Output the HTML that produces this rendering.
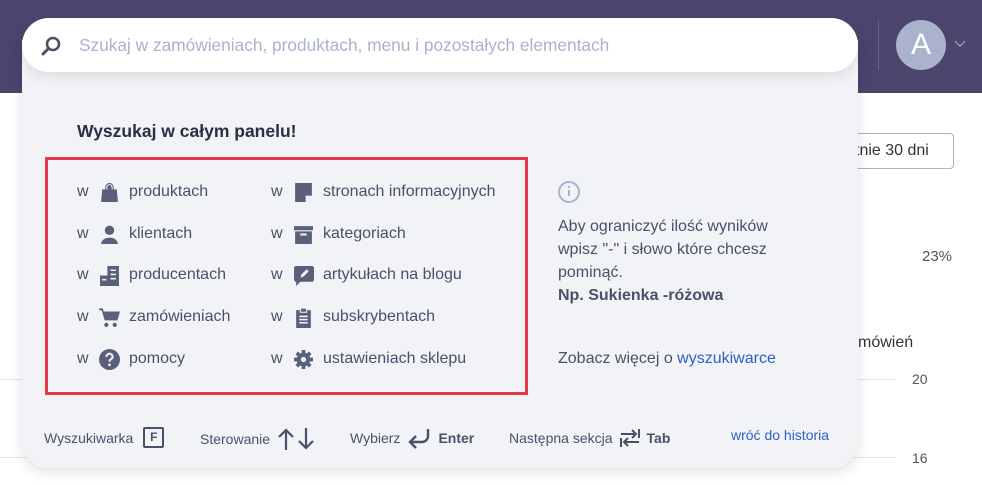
<!DOCTYPE html>
<html><head><meta charset="utf-8"><style>
*{margin:0;padding:0;box-sizing:border-box}
body{width:982px;height:485px;overflow:hidden;background:#fff;font-family:"Liberation Sans",sans-serif;color:#4a5068;position:relative}
.hdr{position:absolute;left:0;top:0;width:982px;height:93px;background:#4b456d}
.abs{position:absolute;white-space:nowrap}
.panel{position:absolute;left:22px;top:40px;width:836px;height:428px;background:#f2f3f7;border-radius:0 0 26px 26px;box-shadow:0 4px 14px rgba(0,0,0,.12)}
.search{position:absolute;left:22px;top:18px;width:836px;height:54px;background:#fff;border-radius:27px;box-shadow:0 6px 12px rgba(0,0,0,.08)}
.red{position:absolute;left:45px;top:157px;width:483px;height:238px;border:3px solid #e23b45}
.row{position:absolute;font-size:16px;color:#4a5068;display:flex;align-items:center;height:24px}
.row .w{width:22px}
.row svg{width:21px;height:21px;margin-right:9px}
.ft{position:absolute;top:427px;font-size:14px;color:#4a5068;display:flex;align-items:center;gap:6px;white-space:nowrap}
</style></head><body>
<div class="hdr"></div>
<div class="abs" style="left:878px;top:20px;width:1px;height:50px;background:#6a6590"></div>
<div class="abs" style="left:896px;top:20px;width:50px;height:50px;border-radius:50%;background:#aab2cd;color:#fff;font-size:30px;text-align:center;line-height:50px">A</div>
<svg class="abs" style="left:954px;top:40px" width="12" height="8" viewBox="0 0 12 8"><path d="M1 1l5 5 5-5" fill="none" stroke="#a9a6c4" stroke-width="1.2"/></svg>
<div class="abs" style="left:840px;top:133px;width:114px;height:36px;border:1px solid #aab2cd;border-radius:4px;font-size:16px;line-height:34px;padding-left:14px;color:#333">tnie 30 dni</div>
<div class="abs" style="left:922px;top:248px;font-size:15px;color:#555">23%</div>
<div class="abs" style="left:858px;top:334px;font-size:16px;color:#333">mówień</div>
<div class="abs" style="left:0;top:379px;width:895px;height:1px;background:#e4e4e4"></div>
<div class="abs" style="left:912px;top:371px;font-size:14px;color:#555">20</div>
<div class="abs" style="left:0;top:457px;width:895px;height:1px;background:#e4e4e4"></div>
<div class="abs" style="left:912px;top:450px;font-size:14px;color:#555">16</div>

<div class="panel"></div>
<div class="search"></div>
<svg class="abs" style="left:40px;top:35px" width="22" height="22" viewBox="0 0 22 22"><circle cx="13" cy="9" r="6" fill="none" stroke="#4a5068" stroke-width="2.6"/><path d="M8.5 13.5L3 19" stroke="#4a5068" stroke-width="3" stroke-linecap="round"/></svg>
<div class="abs" style="left:79px;top:35px;font-size:17.3px;color:#aab2cd">Szukaj w zamówieniach, produktach, menu i pozostałych elementach</div>
<div class="abs" style="left:77px;top:121px;font-size:17.5px;font-weight:bold;color:#2b2f3f">Wyszukaj w całym panelu!</div>
<div class="red"></div>

<div class="row" style="left:77px;top:180px"><span class="w">w</span><svg viewBox="0 0 20 20"><path d="M6 7V5a4 4 0 018 0v2h3l1 12H2L3 7z" fill="#5a6079"/><path d="M7.5 7V5a2.5 2.5 0 015 0v2" fill="none" stroke="#f2f3f7" stroke-width="1"/></svg>produktach</div>
<div class="row" style="left:77px;top:222px"><span class="w">w</span><svg viewBox="0 0 20 20"><circle cx="10" cy="6" r="4.5" fill="#5a6079"/><path d="M2 19a8 6 0 0116 0z" fill="#5a6079"/></svg>klientach</div>
<div class="row" style="left:77px;top:263px"><span class="w">w</span><svg viewBox="0 0 20 20"><path d="M8 1h11v19H8zM1 10h8v10H1z" fill="#5a6079"/><path d="M11 5h5M11 9h5M11 13h5M3 14h4" stroke="#f2f3f7" stroke-width="1.5"/></svg>producentach</div>
<div class="row" style="left:77px;top:305px"><span class="w">w</span><svg viewBox="0 0 20 20"><path d="M0 2h3l3 10h11l2-7H5" fill="#5a6079" stroke="#5a6079" stroke-width="1.5"/><circle cx="7" cy="17" r="2" fill="#5a6079"/><circle cx="15" cy="17" r="2" fill="#5a6079"/></svg>zamówieniach</div>
<div class="row" style="left:77px;top:347px"><span class="w">w</span><svg viewBox="0 0 20 20"><circle cx="10" cy="10" r="10" fill="#5a6079"/><path d="M7 7.5a3 3 0 116 0c0 2-3 2-3 4.5" fill="none" stroke="#f2f3f7" stroke-width="2"/><circle cx="10" cy="15" r="1.3" fill="#f2f3f7"/></svg>pomocy</div>

<div class="row" style="left:271px;top:180px"><span class="w">w</span><svg viewBox="0 0 20 20"><path d="M2 1h16v12l-6 6H2z" fill="#5a6079"/><path d="M12 19v-6h6" fill="#f2f3f7"/></svg>stronach informacyjnych</div>
<div class="row" style="left:271px;top:222px"><span class="w">w</span><svg viewBox="0 0 20 20"><path d="M1 2h18v4H1zM2 7h16v12H2z" fill="#5a6079"/><path d="M7 10h6" stroke="#f2f3f7" stroke-width="2"/></svg>kategoriach</div>
<div class="row" style="left:271px;top:263px"><span class="w">w</span><svg viewBox="0 0 20 20"><path d="M3 1h15a2 2 0 012 2v11a2 2 0 01-2 2H7l-4 4v-4a2 2 0 01-2-2V3a2 2 0 012-2z" fill="#5a6079"/><path d="M7 12l1-3 5-5 2 2-5 5z" fill="#f2f3f7"/></svg>artykułach na blogu</div>
<div class="row" style="left:271px;top:305px"><span class="w">w</span><svg viewBox="0 0 20 20"><path d="M3 3h14v17H3z" fill="#5a6079"/><path d="M7 1h6v4H7z" fill="#5a6079" stroke="#f2f3f7" stroke-width="1"/><path d="M6 9h8M6 12h8M6 15h8" stroke="#f2f3f7" stroke-width="1.5"/></svg>subskrybentach</div>
<div class="row" style="left:271px;top:347px"><span class="w">w</span><svg viewBox="0 0 20 20"><circle cx="10" cy="10" r="6.5" fill="#5a6079"/><path d="M10 1v18M1 10h18M3.6 3.6l12.8 12.8M16.4 3.6L3.6 16.4" stroke="#5a6079" stroke-width="3.5"/><circle cx="10" cy="10" r="2.5" fill="#f2f3f7"/></svg>ustawieniach sklepu</div>

<svg class="abs" style="left:558px;top:181px" width="22" height="22" viewBox="0 0 22 22"><circle cx="11" cy="11" r="10" fill="none" stroke="#aab2cd" stroke-width="2"/><path d="M11 9v6" stroke="#aab2cd" stroke-width="2"/><circle cx="11" cy="6" r="1.2" fill="#aab2cd"/></svg>
<div class="abs" style="left:558px;top:215px;font-size:16px;line-height:23px">Aby ograniczyć ilość wyników<br>wpisz "-" i słowo które chcesz<br>pominąć.<br><b>Np. Sukienka -różowa</b></div>
<div class="abs" style="left:558px;top:350px;font-size:16px">Zobacz więcej o <span style="color:#2c5fc8">wyszukiwarce</span></div>

<div class="ft" style="left:44px">Wyszukiwarka <span style="display:inline-block;width:21px;height:21px;border:2px solid #4a5068;border-radius:2px;font-size:12px;font-weight:bold;text-align:center;line-height:17px;margin-left:4px">F</span></div>
<div class="ft" style="left:200px">Sterowanie <svg width="40" height="24" viewBox="0 0 40 24"><path d="M10 23V3M3 10l7-7 7 7M30 1v20M23 14l7 7 7-7" fill="none" stroke="#4a5068" stroke-width="2.2"/></svg></div>
<div class="ft" style="left:350px">Wybierz <svg width="26" height="22" viewBox="0 0 26 22"><path d="M22 2v7a6 6 0 01-6 6H5M10 9l-6 6 6 6" fill="none" stroke="#4a5068" stroke-width="2.4"/></svg> <b>Enter</b></div>
<div class="ft" style="left:509px">Następna sekcja <svg width="22" height="22" viewBox="0 0 22 22"><path d="M2 7h15M13 3l4 4-4 4M20 2v9M20 15H5M9 11l-4 4 4 4M2 11v9" fill="none" stroke="#4a5068" stroke-width="2"/></svg> <b>Tab</b></div>
<div class="ft" style="left:731px;color:#2c5fc8">wróć do historia</div>
</body></html>
